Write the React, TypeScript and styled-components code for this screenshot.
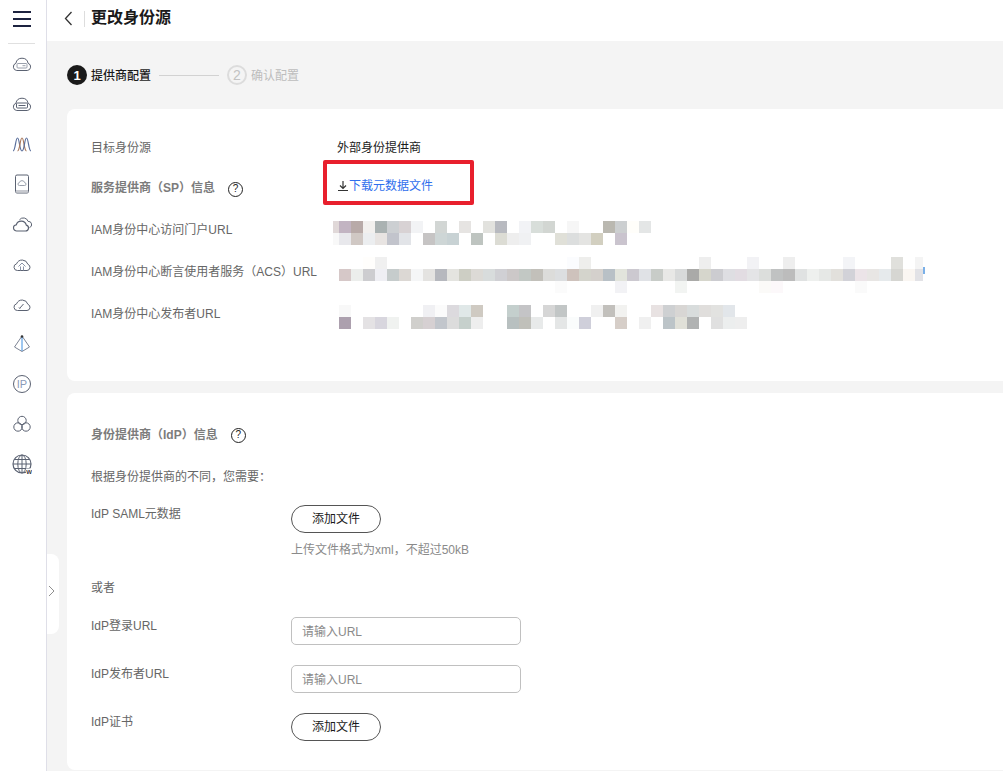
import React from 'react'
import styled, { createGlobalStyle } from 'styled-components'

const GlobalStyle = createGlobalStyle`
  html, body {
    margin: 0;
    height: 100%;
    overflow: hidden;
    background: #f4f4f4;
    font-family: 'Liberation Sans', 'Noto Sans CJK SC', sans-serif;
    font-size: 12px;
    color: #666;
  }
`

const Page = styled.div`
  display: flex;
  width: 1003px;
  height: 771px;
  overflow: hidden;
`

const Sidebar = styled.aside`
  flex: none;
  box-sizing: border-box;
  width: 47px;
  padding-right: 3px;
  background: #fff;
  border-right: 1px solid #dfdfe8;
  display: flex;
  flex-direction: column;
  align-items: center;
`

const MenuButton = styled.div`
  width: 18px;
  height: 16px;
  margin-top: 11px;
  display: flex;
  flex-direction: column;
  justify-content: space-between;
`

const MenuLine = styled.span`
  display: block;
  height: 2px;
  background: #1d2340;
`

const SideDivider = styled.div`
  width: 27px;
  height: 1px;
  margin-top: 16px;
  background: #e0e0e0;
`

const IconList = styled.div`
  margin-top: 10px;
  display: flex;
  flex-direction: column;
  gap: 20px;
`

const SideSvg = styled.svg`
  display: block;
  width: 20px;
  height: 20px;
  fill: none;
  stroke: #5b6272;
  stroke-width: 1;
`

const CollapseTab = styled.div`
  position: absolute;
  left: 47px;
  top: 554px;
  box-sizing: border-box;
  width: 12px;
  height: 80px;
  padding: 0 0 6px 1px;
  background: #fff;
  border-radius: 0 8px 8px 0;
  display: flex;
  align-items: center;
`

const CollapseIcon = styled.svg`
  width: 7px;
  height: 12px;
  fill: none;
  stroke: #8f8f8f;
  stroke-width: 1;
`

const Main = styled.main`
  flex: 1;
  min-width: 0;
  display: flex;
  flex-direction: column;
`

const Header = styled.header`
  flex: none;
  height: 41px;
  background: #fff;
  display: flex;
  align-items: flex-start;
`

const BackIcon = styled.svg`
  width: 9px;
  height: 15px;
  margin: 11px 0 0 17px;
  fill: none;
  stroke: #333;
  stroke-width: 1.3;
`

const HeaderDivider = styled.div`
  width: 1px;
  height: 16px;
  margin: 11px 6px 0 11px;
  background: #ddd;
`

const Title = styled.h1`
  margin: 7px 0 0;
  font-size: 16px;
  line-height: 22px;
  font-weight: 700;
  color: #1a1a1a;
`

const Content = styled.div`
  flex: 1;
  padding-left: 20px;
  width: 1000px;
  box-sizing: border-box;
`

const Steps = styled.div`
  height: 68px;
  display: flex;
  align-items: center;
`

const StepDot = styled.span<{ $active?: boolean }>`
  box-sizing: border-box;
  width: 20px;
  height: 20px;
  border-radius: 50%;
  display: flex;
  align-items: center;
  justify-content: center;
  font-size: ${(p) => (p.$active ? '13px' : '14px')};
  font-weight: ${(p) => (p.$active ? 700 : 400)};
  color: ${(p) => (p.$active ? '#fff' : '#c2c2c2')};
  background: ${(p) => (p.$active ? '#1a1a1a' : 'transparent')};
  border: ${(p) => (p.$active ? 'none' : '2px solid #dcdcdc')};
`

const StepLabel = styled.span<{ $active?: boolean }>`
  margin: 0 0 2px 4px;
  color: ${(p) => (p.$active ? '#1a1a1a' : '#bdbdbd')};
  font-weight: ${(p) => (p.$active ? 500 : 400)};
`

const StepLine = styled.span`
  width: 60px;
  height: 1px;
  margin: 0 8px;
  background: #d2d2d2;
`

const Card = styled.section<{ $height: number; $top: number }>`
  box-sizing: border-box;
  height: ${(p) => p.$height}px;
  margin-bottom: 12px;
  padding: ${(p) => p.$top}px 0 0 24px;
  background: #fff;
  border-radius: 8px;
  position: relative;
`

const Row = styled.div<{ $height?: number; $gap?: number }>`
  display: flex;
  align-items: flex-start;
  line-height: 22px;
  height: ${(p) => (p.$height ? `${p.$height}px` : 'auto')};
  margin-top: ${(p) => p.$gap || 0}px;
`

const Label = styled.div<{ $width: number }>`
  flex: none;
  width: ${(p) => p.$width}px;
`

const Value = styled.div`
  color: #1a1a1a;
`

const SectionTitle = styled.div`
  display: flex;
  align-items: center;
  height: 20px;
  line-height: 20px;
  font-weight: 700;
  color: #7c7c7c;
`

const HelpMark = styled.span<{ $gap: number; $drop?: number }>`
  box-sizing: border-box;
  width: 15px;
  height: 15px;
  margin-left: ${(p) => p.$gap}px;
  margin-top: ${(p) => p.$drop || 0}px;
  border: 1px solid #222;
  border-radius: 50%;
  display: flex;
  align-items: center;
  justify-content: center;
  font-size: 10px;
  font-weight: 400;
  color: #222;
`

const DownloadLink = styled.a`
  display: flex;
  align-items: center;
  height: 16px;
  color: #2f6fed;
`

const DownloadIcon = styled.svg`
  width: 12px;
  height: 12px;
  fill: none;
  stroke: #333;
  stroke-width: 1.2;
`

const Highlight = styled.div`
  position: absolute;
  left: 256px;
  top: 51px;
  box-sizing: border-box;
  width: 151px;
  height: 45px;
  border: 4px solid #e81f2d;
  border-radius: 2px;
`

const MosaicSvg = styled.svg<{ $shift: number }>`
  display: block;
  margin: ${(p) => p.$shift}px 0 0 -4px;
`

const Control = styled.div`
  margin-top: 2px;
`

const PillButton = styled.button`
  display: block;
  box-sizing: border-box;
  width: 90px;
  height: 28px;
  padding: 0;
  background: #fff;
  border: 1px solid #555;
  border-radius: 14px;
  font: inherit;
  color: #1a1a1a;
`

const Hint = styled.div`
  margin-top: 7px;
  color: #8a8a8a;
  line-height: 20px;
`

const TextField = styled.input`
  display: block;
  box-sizing: border-box;
  width: 230px;
  height: 28px;
  padding: 2px 10px 0;
  background: #fff;
  border: 1px solid #c0c0c0;
  border-radius: 5px;
  font: inherit;
  outline: none;
  &::placeholder {
    color: #8a8a8a;
    opacity: 1;
  }
`

type MosaicRow = { y: number; cells: string }

const blockOne: MosaicRow[] = [
  { y: 0, cells: 'c2b4c2 b8aaa8 f2f0ee aab2b2 cccfd2 d8d2d4 f2f3f5 - d2d6d4 - e6e4e2 - e2e2de b8bac0 - f2f3f6 d8deda d2d6d2 - f6f6f6 - - bab8b0 cccfd0 fffefa e4e6e6' },
  { y: 12, cells: 'e8e8ec d0c8c4 eceef0 e8e4e2 c2c4cc e2e4e8 - c6c4c4 ced6d6 c8d2d4 - bec4c0 - dcdcd4 eeeeee f0f1f3 - - e0e0d8 dcdede e4e4e2 d2cfc0 - cac4ce' },
]

const blockTwo: MosaicRow[] = [
  { y: 0, cells: '- - fffefc f0f0f0 - - - - - - - - - - - - - - - fbfcfe eeeeec - - - - - - - - - eeeeee - - - f2f2f5 - - eeeeee - - - - f3f4f7 - - - e0e0dc - f4f4f4' },
  { y: 12, cells: 'd6c8c8 eceeec cdcdd0 efeff4 c6cccc dcd8d4 f5f6f7 e4e3e1 b6b8be e4e4e0 cdcec4 dcdad6 d8dcdc d0d0d4 ccc8c8 c2c8c4 c2c0ba dcdcda dcdee0 cec2bc d4d4cc d4d0cc b8c0c6 e2e4dc ccc9d0 e0e2e6 c8ccc8 e8e8e6 d8dada aaaaa8 d6d6cc ccccd0 dedee2 e2dce2 e4e4e6 dcdedc c0c2c2 bcbcbc e0e2e2 eef0ee e6e8e6 e2e0dc d2d2d8 ece4e8 e8e6e4 e6eaec d6d6d2 faf6f2 e2e2e6' },
  { y: 24, cells: '- - - - - - - - - - - - - - - - - - fbfbfb - - - - f2f2f5 - - - - f2f4f2 - - - - - - fbfaf8 fcf8fa - - - - - - fafafa' },
]

const blockThree: MosaicRow[] = [
  { y: 0, cells: 'f8f8f8 - - - - - - f0f0f3 fbfbfb dcdade e0e8e8 cfcac2 - - c4cfcd c4c4c6 - d6d6d6 c2c6c6 - - f0f0f0 c2c0bc f2f2f0 - - e8e2e2 ced0d2 d8d6d4 d8dcdc e0dedc e2e2e0 e2e6ea' },
  { y: 12, cells: 'aca0ae - e4e2e4 d8d6de f0f2f0 - d0cfcc d6d0d2 c2c6cc dcdcdc c6d0cc eeeeee - - b8c0c0 c0c0ba e8eaea - e4e6e6 fafcfc cfcfda - - d6cec8 - f0f0f0 - bcc4c8 e0e0d8 b0b2b2 - e0e0e0 eceeee eeeeee' },
]

// pixelated values from the reference, cells are 12px wide starting 6px in
const Mosaic = ({ rows, shift, lead, tail }: { rows: MosaicRow[]; shift: number; lead?: string[]; tail?: boolean }) => {
  const height = Math.max(...rows.map((r) => r.y)) + 12
  return (
    <MosaicSvg $shift={shift} width={592} height={height} viewBox={`0 0 592 ${height}`}>
      {lead &&
        lead.map((color, i) => <rect key={color} x={0} y={i * 12} width={6} height={12} fill={`#${color}`} />)}
      {rows.map((row) =>
        row.cells.split(' ').map((color, i) => {
          if (color === '-') return null
          const x = 6 + i * 12
          return <rect key={`${row.y}-${i}`} x={x} y={row.y} width={Math.min(12, 590 - x)} height={12} fill={`#${color}`} />
        }),
      )}
      {tail && <rect x={590} y={10} width={2} height={7} fill="#7ab0e8" />}
    </MosaicSvg>
  )
}

const cloud = 'M5.5 16.5h9.5a3.2 3.2 0 0 0 .9-6.2A6 6 0 0 0 4.6 9.8 3.4 3.4 0 0 0 5.5 16.5z'

const sideIcons = [
  <>
    <path d="M4.8 16.5h10.4a3.7 3.7 0 0 0 .9-7.2 6.2 6.2 0 0 0-12.2 0 3.7 3.7 0 0 0 .9 7.2z" />
    <rect x="5" y="9.5" width="10" height="4.5" rx="1" stroke="#9aa0ac" />
    <path d="M10.5 11.7h3" stroke="#9aa0ac" />
  </>,
  <>
    <path d="M4.8 16.5h10.4a3.7 3.7 0 0 0 .9-7.2 6.2 6.2 0 0 0-12.2 0 3.7 3.7 0 0 0 .9 7.2z" />
    <rect x="4.5" y="9" width="11" height="5" rx="1" />
    <path d="M6.5 11.5h7" />
  </>,
  <>
    <path d="M1 17C3.5 17 3.5 4 5.5 4S7.5 17 10 17" stroke="#5a6f9c" strokeWidth="1.2" />
    <path d="M5.5 17C8 17 8 4 10 4S12 17 14.5 17" stroke="#a9785c" strokeWidth="1.2" />
    <path d="M10 17C12.5 17 12.5 4 14.5 4S16.5 17 19 17" stroke="#5a6f9c" strokeWidth="1.2" />
  </>,
  <>
    <rect x="3.5" y="1" width="13" height="18" rx="1.5" />
    <rect x="4" y="16" width="12" height="2.6" fill="#c8cad0" stroke="none" />
    <path d="M7.5 11.5h5a1.4 1.4 0 0 0 .2-2.8 2.8 2.8 0 0 0-5.4 0 1.4 1.4 0 0 0 .2 2.8z" stroke="#9aa0ac" />
  </>,
  <>
    <path d="M5 17h8.5a3 3 0 0 0 .8-5.9 5.2 5.2 0 0 0-10-.3A3.1 3.1 0 0 0 5 17z" strokeWidth="1.2" />
    <path d="M7.5 5.7a5 5 0 0 1 8.6 1.7 3.2 3.2 0 0 1 1.4 6.2" />
  </>,
  <>
    <path d={cloud} />
    <path d="M6.5 12.5L10 9l3.5 3.5M8.5 12.5v4M11.5 12.5v4" stroke="#8a93a6" />
  </>,
  <>
    <path d={cloud} />
    <path d="M7.5 14.5l4-4.5" />
    <path d="M7 13.5l1 1" />
  </>,
  <>
    <path d="M10 2L2.5 13 10 17.5 17.5 13z" stroke="#7d8494" />
    <path d="M10 2v15" stroke="#3f8fe0" />
    <circle cx="10" cy="2.5" r="1.3" fill="#333" stroke="none" />
  </>,
  <>
    <circle cx="10" cy="10" r="8.5" />
    <text x="10" y="13.8" textAnchor="middle" fontSize="11" stroke="none" fill="#8a9ab8">
      IP
    </text>
  </>,
  <>
    <circle cx="10" cy="6.5" r="4.2" />
    <circle cx="6" cy="13" r="4.2" />
    <circle cx="14" cy="13" r="4.2" />
  </>,
  <>
    <circle cx="10" cy="10" r="9" strokeWidth="1.2" />
    <ellipse cx="10" cy="10" rx="4.2" ry="9" />
    <path d="M1 10h18M2.6 5.5h14.8M2.6 14.5h14.8M10 1v18" />
    <rect x="14" y="14.5" width="6" height="5.5" fill="#fff" stroke="none" />
    <text x="17" y="19.5" textAnchor="middle" fontSize="6" fontWeight="700" stroke="none" fill="#333">
      W
    </text>
  </>,
]

export default function App() {
  return (
    <Page>
      <GlobalStyle />
      <Sidebar>
        <MenuButton>
          <MenuLine />
          <MenuLine />
          <MenuLine />
        </MenuButton>
        <SideDivider />
        <IconList>
          {sideIcons.map((icon, i) => (
            <SideSvg key={i} viewBox="0 0 20 20">
              {icon}
            </SideSvg>
          ))}
        </IconList>
      </Sidebar>
      <CollapseTab>
        <CollapseIcon viewBox="0 0 7 12">
          <path d="M1 1l5 5-5 5" />
        </CollapseIcon>
      </CollapseTab>
      <Main>
        <Header>
          <BackIcon viewBox="0 0 9 15">
            <path d="M7.5 1L1.5 7.5l6 6.5" />
          </BackIcon>
          <HeaderDivider />
          <Title>更改身份源</Title>
        </Header>
        <Content>
          <Steps>
            <StepDot $active>1</StepDot>
            <StepLabel $active>提供商配置</StepLabel>
            <StepLine />
            <StepDot>2</StepDot>
            <StepLabel>确认配置</StepLabel>
          </Steps>
          <Card $height={272} $top={28}>
            <Row $height={41}>
              <Label $width={246}>目标身份源</Label>
              <Value>外部身份提供商</Value>
            </Row>
            <Row $height={41}>
              <Label $width={246}>
                <SectionTitle>
                  服务提供商（SP）信息
                  <HelpMark $gap={13} $drop={2}>
                    ?
                  </HelpMark>
                </SectionTitle>
              </Label>
              <DownloadLink>
                <DownloadIcon viewBox="0 0 12 12">
                  <path d="M6 1v7M3 5.5L6 8.5l3-3M1 10.5h10" />
                </DownloadIcon>
                下载元数据文件
              </DownloadLink>
            </Row>
            <Row $height={42}>
              <Label $width={246}>IAM身份中心访问门户URL</Label>
              <Mosaic rows={blockOne} shift={2} lead={['e0d8d8', 'f8f8f8']} />
            </Row>
            <Row $height={42}>
              <Label $width={246}>IAM身份中心断言使用者服务（ACS）URL</Label>
              <Mosaic rows={blockTwo} shift={-4} tail />
            </Row>
            <Row>
              <Label $width={246}>IAM身份中心发布者URL</Label>
              <Mosaic rows={blockThree} shift={2} />
            </Row>
            <Highlight />
          </Card>
          <Card $height={377} $top={32}>
            <SectionTitle>
              身份提供商（IdP）信息
              <HelpMark $gap={13}>?</HelpMark>
            </SectionTitle>
            <Row $gap={21}>根据身份提供商的不同，您需要：</Row>
            <Row $gap={15}>
              <Label $width={200}>IdP SAML元数据</Label>
              <Control>
                <PillButton>添加文件</PillButton>
                <Hint>上传文件格式为xml，不超过50kB</Hint>
              </Control>
            </Row>
            <Row $gap={17}>或者</Row>
            <Row $gap={16}>
              <Label $width={200}>IdP登录URL</Label>
              <Control>
                <TextField placeholder="请输入URL" />
              </Control>
            </Row>
            <Row $gap={18}>
              <Label $width={200}>IdP发布者URL</Label>
              <Control>
                <TextField placeholder="请输入URL" />
              </Control>
            </Row>
            <Row $gap={18}>
              <Label $width={200}>IdP证书</Label>
              <Control>
                <PillButton>添加文件</PillButton>
              </Control>
            </Row>
          </Card>
        </Content>
      </Main>
    </Page>
  )
}
